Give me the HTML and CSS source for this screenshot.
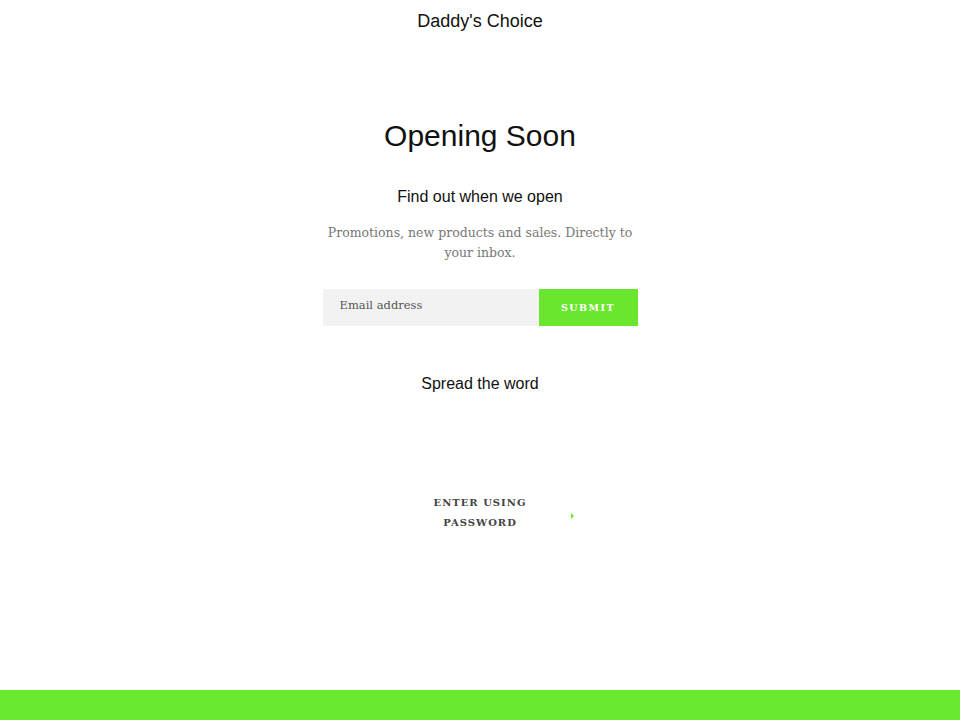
FILE: index.html
```html
<!DOCTYPE html>
<html>
<head>
<meta charset="utf-8">
<link rel="stylesheet" href="styles.css">
</head>
<body>
<div class="page">
  <header class="header">Daddy's Choice</header>
  <main class="main">
    <h1 class="title">Opening Soon</h1>
    <h2 class="subtitle">Find out when we open</h2>
    <p class="desc">Promotions, new products and sales. Directly to your inbox.</p>
    <form class="form">
      <input class="email" type="email" placeholder="Email address">
      <button class="submit" type="button">Submit</button>
    </form>
    <h2 class="spread">Spread the word</h2>
    <div class="enter">
      <span class="enter-text">Enter using password</span>
      <span class="arrow"></span>
    </div>
  </main>
  <footer class="footer"></footer>
</div>
</body>
</html>
```
FILE: styles.css
```css
* { box-sizing: border-box; }
html, body { margin: 0; padding: 0; background: #fff; }
.page {
  width: 960px;
  height: 720px;
  display: flex;
  flex-direction: column;
}
.header {
  font-family: "Liberation Sans", Arial, sans-serif;
  font-size: 18px;
  color: #111;
  text-align: center;
  padding-top: 10px;
  line-height: 22px;
}
.main {
  flex: 1;
  display: flex;
  flex-direction: column;
  align-items: center;
}
.title {
  font-family: "Liberation Sans", Arial, sans-serif;
  font-weight: normal;
  font-size: 30px;
  line-height: 36px;
  margin: 86px 0 0;
  color: #111;
}
.subtitle, .spread {
  font-family: "Liberation Sans", Arial, sans-serif;
  font-weight: normal;
  font-size: 16px;
  line-height: 22px;
  color: #111;
  margin: 0;
}
.subtitle { margin-top: 32px; }
.desc {
  font-family: "DejaVu Serif", serif;
  font-size: 12.5px;
  line-height: 20px;
  color: #777;
  text-align: center;
  width: 320px;
  margin: 15px 0 0;
}
.form {
  display: flex;
  margin-top: 26px;
  width: 315px;
  height: 37px;
}
.email {
  width: 216px;
  border: none;
  background: #f2f2f2;
  padding: 0 17px 6px;
  font-family: "DejaVu Serif", serif;
  font-size: 11.5px;
  color: #555;
  outline: none;
}
.email::placeholder { color: #555; }
.submit {
  width: 99px;
  border: none;
  background: #6ae62f;
  color: #fff;
  font-family: "DejaVu Serif", serif;
  font-weight: bold;
  font-size: 9.5px;
  letter-spacing: 1.5px;
  text-transform: uppercase;
  padding: 0;
}
.spread { margin-top: 47px; }
.enter {
  position: relative;
  margin-top: 98px;
  width: 200px;
  text-align: center;
}
.enter-text {
  display: inline-block;
  width: 100px;
  font-family: "DejaVu Serif", serif;
  font-size: 10px;
  font-weight: bold;
  letter-spacing: 1px;
  text-transform: uppercase;
  line-height: 20px;
  color: #444;
}
.arrow {
  position: absolute;
  left: 191px;
  top: 20px;
  width: 0;
  height: 0;
  border-left: 3px solid #6ae62f;
  border-top: 3px solid transparent;
  border-bottom: 3px solid transparent;
}
.footer {
  height: 30px;
  background: #6aea2f;
}
```
